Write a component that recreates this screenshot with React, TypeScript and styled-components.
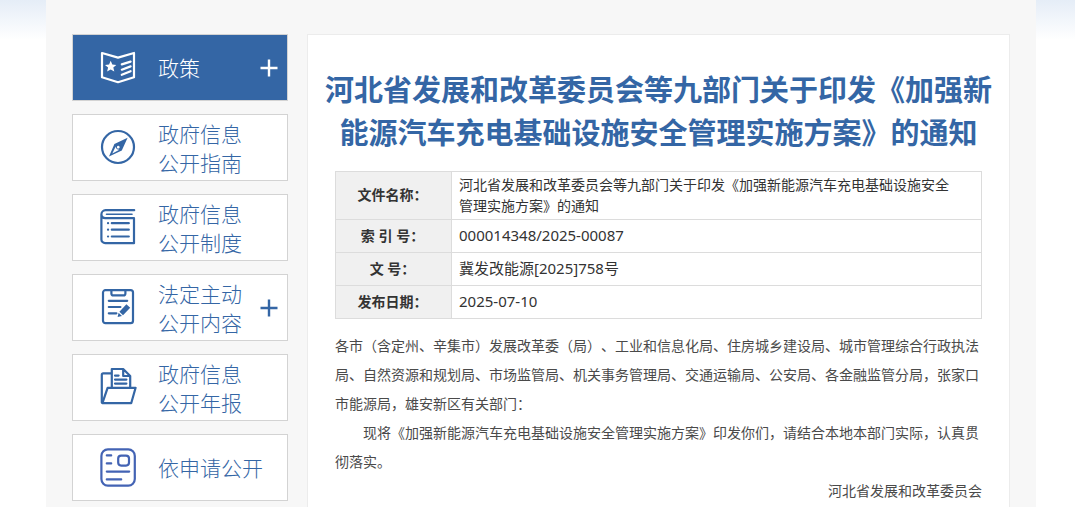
import React from "react";
import styled, { createGlobalStyle } from "styled-components";

const BLUE = "#3466a5";

const GlobalStyle = createGlobalStyle`
  *, *::before, *::after { box-sizing: border-box; }
  body {
    margin: 0;
    background: #fff;
    color: #333;
    font-family: "Noto Sans", "Noto Sans CJK SC", sans-serif;
    font-size: 14px;
    text-spacing-trim: space-all;
  }
`;

const Page = styled.div`
  min-height: 100vh;
  padding: 0 39px 0 46px;
  display: flex;
  background: linear-gradient(#e5edf7, #fff 40px);
`;

const Content = styled.div`
  flex: 1;
  min-width: 0;
  display: flex;
  gap: 19px;
  padding: 34px 26px 0;
  background: #f7f7f7;
`;

const Menu = styled.ul`
  flex: 0 0 216px;
  margin: 0;
  padding: 0;
  list-style: none;
  display: flex;
  flex-direction: column;
  gap: 13px;
`;

const MenuItem = styled.li<{ $active?: boolean }>`
  display: flex;
  align-items: center;
  height: 67px;
  padding-right: 8px;
  border: 1px solid #d3d3d3;
  background: ${(p) => (p.$active ? BLUE : "#fff")};
  color: ${(p) => (p.$active ? "#fff" : BLUE)};
`;

const MenuLink = styled.a`
  flex: 1;
  display: flex;
  align-items: center;
  gap: 21px;
  padding-left: 26px;
  color: inherit;
  text-decoration: none;
`;

const MenuText = styled.span`
  font-family: "Noto Sans CJK SC", sans-serif;
  font-weight: 300;
  font-size: 21px;
  line-height: 29px;
  white-space: pre-line;
`;

const Icon = styled.svg`
  flex: none;
  width: 38px;
  height: 41px;
  fill: none;
  stroke: currentColor;
  stroke-width: 2.2;
  stroke-linejoin: round;
  stroke-linecap: round;
`;

const ExpandButton = styled.button`
  flex: none;
  display: flex;
  padding: 0;
  border: 0;
  background: none;
  color: inherit;
  cursor: pointer;

  svg {
    width: 20px;
    height: 20px;
    stroke: currentColor;
    stroke-width: 2.4;
  }
`;

const Article = styled.main`
  flex: 1;
  min-width: 0;
  padding-top: 33px;
  border: 1px solid #ececec;
  border-bottom: 0;
  background: #fff;
`;

const Title = styled.h1`
  margin: 0 0 17px;
  padding: 0 16px;
  color: ${BLUE};
  font-size: 29px;
  font-weight: 700;
  line-height: 43px;
  text-align: center;
`;

const Body = styled.div`
  padding: 0 27px;
`;

const InfoTable = styled.table`
  width: 100%;
  border-collapse: collapse;
  line-height: 21px;
`;

const InfoLabel = styled.th`
  width: 116px;
  padding: 0 2px 2px 0;
  border: 1px solid #dcdcdc;
  background: #f0f0f0;
  font-weight: 700;
  text-align: center;
`;

const InfoValue = styled.td<{ $long?: boolean }>`
  height: 33px;
  padding: ${(p) => (p.$long ? "2px 20px 3px 7px" : "0 7px 2px")};
  border: 1px solid #dcdcdc;
  font-size: ${(p) => (p.$long ? "14px" : "15px")};
`;

const Letter = styled.section`
  margin-top: 12px;
  color: #4a4a4a;
  font-family: "Noto Sans CJK SC", sans-serif;
  line-height: 29px;
`;

const Paragraph = styled.p<{ $indent?: boolean; $right?: boolean }>`
  margin: 0;
  text-indent: ${(p) => (p.$indent ? "2em" : "0")};
  text-align: ${(p) => (p.$right ? "right" : "left")};
`;

const PolicyIcon = () => (
  <Icon viewBox="0 0 38 41" aria-hidden="true">
    <path d="M3 6 19 10.6 35 6V30.2L19 35.2 3 30.2Z" />
    <path
      d="M11.7 13.8 13.3 17.6 17.3 17.9 14.3 20.6 15.3 24.6 11.7 22.5 8.1 24.6 9.1 20.6 6 17.9 10.1 17.6Z"
      fill="currentColor"
      stroke="none"
    />
    <path d="M22.8 17.4 31.6 14.6M22.8 22.7 31.6 19.4M22.8 27.8 31.6 24.2" />
  </Icon>
);

const CompassIcon = () => (
  <Icon viewBox="0 0 38 41" aria-hidden="true">
    <circle cx="19" cy="20" r="16" />
    <path
      fillRule="evenodd"
      d="M28.6 10.8 15.4 17 10 29.6 22.8 23.6ZM16.7 19.6 13.3 26.6 20.4 22.8 18.6 22.4 16.9 21ZM19.2 18.8a1.4 1.4 0 1 0 .1 0Z"
      fill="currentColor"
      stroke="none"
    />
  </Icon>
);

const BookIcon = () => (
  <Icon viewBox="0 0 38 41" aria-hidden="true">
    <path d="M35.2 3.2H6.6A4.2 4.2 0 0 0 2.4 7.4V32.4A3.8 3.8 0 0 0 6.2 36.2H35V11.2H6.2A4 4 0 0 1 2.4 7.4" />
    <path d="M7.5 7.2H33" strokeWidth="1.6" />
    <path d="M12.8 16.2H29.8M12.8 22.7H29.8M12.8 29.5H29.8" />
    <path d="M9 16.2H9.1M9 22.7H9.1M9 29.5H9.1" />
  </Icon>
);

const ClipboardIcon = () => (
  <Icon viewBox="0 0 38 41" aria-hidden="true">
    <rect x="4" y="3.2" width="30" height="33" rx="2.4" />
    <path d="M12.4 3.4V6.4A2 2 0 0 0 14.4 8.4H24.4A2 2 0 0 0 26.4 6.4V3.4" />
    <path d="M9.8 13.8H28.2M9.8 20H21.4M9.8 26.3H17.4" />
    <path d="M27.4 17.2 31.2 20.8 24 28.2 20.4 24.8ZM19.6 25.8 23 29 18.6 30Z" fill="currentColor" stroke="none" />
  </Icon>
);

const FolderIcon = () => (
  <Icon viewBox="0 0 38 41" aria-hidden="true">
    <path d="M11.8 6.4H4.2A1.4 1.4 0 0 0 2.8 7.8V35.4" />
    <path d="M12.8 20.2V2H24.2L31.2 9V20.2M24.2 2V9H31.2" />
    <path d="M16 8.6H19.6M16 12.6H27.4M16 16.6H27.4" />
    <path d="M8.6 20.8H36.6L32.2 36.2H3.4Z" />
  </Icon>
);

const FormIcon = () => (
  <Icon viewBox="0 0 38 41" color="#4363b4" aria-hidden="true">
    <rect x="2.4" y="2.4" width="33.4" height="36.2" rx="6.5" />
    <rect x="19.2" y="8.6" width="10.8" height="10" rx="3" />
    <path d="M7.8 8.4H12.2M7.8 16.4H12.2M7.8 24.6H30.2M7.8 32.4H22.2" />
  </Icon>
);

const menu = [
  { text: "政策", icon: PolicyIcon, active: true, expandable: true },
  { text: "政府信息\n公开指南", icon: CompassIcon },
  { text: "政府信息\n公开制度", icon: BookIcon },
  { text: "法定主动\n公开内容", icon: ClipboardIcon, expandable: true },
  { text: "政府信息\n公开年报", icon: FolderIcon },
  { text: "依申请公开", icon: FormIcon },
];

const info = [
  {
    label: "文件名称：",
    value: "河北省发展和改革委员会等九部门关于印发《加强新能源汽车充电基础设施安全管理实施方案》的通知",
    long: true,
  },
  { label: "索 引 号：", value: "000014348/2025-00087" },
  { label: "文 号：", value: "冀发改能源[2025]758号" },
  { label: "发布日期：", value: "2025-07-10" },
];

export default function App() {
  return (
    <>
      <GlobalStyle />
      <Page>
        <Content>
          <Menu>
            {menu.map(({ text, icon: ItemIcon, active, expandable }) => (
              <MenuItem key={text} $active={active}>
                <MenuLink href="#">
                  <ItemIcon />
                  <MenuText>{text}</MenuText>
                </MenuLink>
                {expandable && (
                  <ExpandButton type="button" aria-label="展开">
                    <svg viewBox="0 0 20 20" aria-hidden="true">
                      <path d="M1.5 10H18.5M10 1.5V18.5" />
                    </svg>
                  </ExpandButton>
                )}
              </MenuItem>
            ))}
          </Menu>
          <Article>
            <Title>河北省发展和改革委员会等九部门关于印发《加强新能源汽车充电基础设施安全管理实施方案》的通知</Title>
            <Body>
              <InfoTable>
                <tbody>
                  {info.map((row) => (
                    <tr key={row.label}>
                      <InfoLabel scope="row">{row.label}</InfoLabel>
                      <InfoValue $long={row.long}>{row.value}</InfoValue>
                    </tr>
                  ))}
                </tbody>
              </InfoTable>
              <Letter>
                <Paragraph>
                  各市（含定州、辛集市）发展改革委（局）、工业和信息化局、住房城乡建设局、城市管理综合行政执法局、自然资源和规划局、市场监管局、机关事务管理局、交通运输局、公安局、各金融监管分局，张家口市能源局，雄安新区有关部门：
                </Paragraph>
                <Paragraph $indent>
                  现将《加强新能源汽车充电基础设施安全管理实施方案》印发你们，请结合本地本部门实际，认真贯彻落实。
                </Paragraph>
                <Paragraph $right>河北省发展和改革委员会</Paragraph>
              </Letter>
            </Body>
          </Article>
        </Content>
      </Page>
    </>
  );
}
